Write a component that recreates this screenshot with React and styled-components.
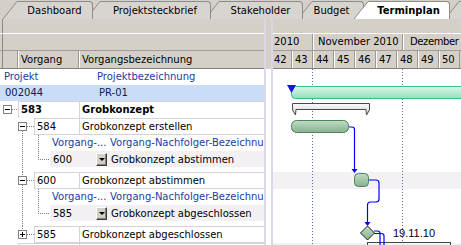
import React from 'react';
import styled, { createGlobalStyle } from 'styled-components';

const GlobalStyle = createGlobalStyle`
  html, body { margin: 0; padding: 0; background: #fff; }
  body { font-family: "DejaVu Sans", Verdana, sans-serif; font-size: 10px; color: #000; }
  * { box-sizing: border-box; }
`;

const Frame = styled.div`
  width: 461px;
  height: 245px;
  overflow: hidden;
  background: #d4d0c8;
  display: flex;
  flex-direction: column;
`;

// tabs
const TabBar = styled.div`
  display: flex;
  align-items: flex-end;
  height: 19px;
  flex: none;
  padding-left: 3px;
  background: #d4d0c8;
  overflow: hidden;
`;
const TabItem = styled.div`
  display: flex;
  flex: none;
  height: 18px;
  margin-left: ${p => p.$ml || 0}px;
  z-index: ${p => p.$z};
`;
const SlantSvg = styled.svg`
  display: block;
  flex: none;
`;
const TabLabel = styled.div`
  width: ${p => p.$w}px;
  height: 18px;
  padding-right: ${p => p.$pr || 0}px;
  line-height: 17px;
  text-align: center;
  white-space: nowrap;
  background: ${p => (p.$active ? '#fff' : '#d8d5d0')};
  border-top: 1px solid #8e8c88;
  border-right: 1px solid #8e8c88;
  border-top-right-radius: 4px;
  font-weight: ${p => (p.$active ? 700 : 400)};
`;

const Tab = ({ label, w, pr, ml, z, active }) => (
  <TabItem $ml={ml} $z={z}>
    <SlantSvg width="14" height="18" viewBox="0 0 14 18">
      <polygon points="0,18 14,0.5 14,18" fill={active ? '#fff' : '#d8d5d0'} />
      <line x1="0" y1="18" x2="14" y2="0.5" stroke="#8e8c88" />
    </SlantSvg>
    <TabLabel $w={w} $pr={pr} $active={active}>{label}</TabLabel>
  </TabItem>
);

// panes
const Body = styled.div`
  display: flex;
  flex: 1;
  min-height: 0;
`;
const LeftPane = styled.div`
  width: 264px;
  flex: none;
  overflow: hidden;
  display: flex;
  flex-direction: column;
  background: #fff;
`;
const Splitter = styled.div`
  width: 9px;
  flex: none;
  border-left: 2px solid #dcd7e6;
  border-right: 2px solid #dcd7e6;
  background: linear-gradient(#d4d0c8 0 50px, #fff 50px);
`;
const GanttPane = styled.div`
  flex: 1;
  min-width: 0;
  overflow: hidden;
  display: flex;
  flex-direction: column;
  background: #fff;
`;

const edge = p => (p.$edge ? 'box-shadow: inset 2px 0 #d4d0c8, inset 3px 0 #8a8884;' : '');

const ToolRow = styled.div`
  height: 15px;
  flex: none;
  background: #d4d0c8;
  border-bottom: 1px solid #fff;
  ${edge}
`;
const BandRow = styled.div`
  height: 17px;
  flex: none;
  display: flex;
  background: #d4d0c8;
  border-bottom: 1px solid #a09c98;
  ${edge}
`;
const HeadRow = styled.div`
  height: 18px;
  flex: none;
  display: flex;
  background: #d4d0c8;
  border-bottom: 1px solid #808080;
  ${edge}
`;
const HeadCell = styled.div`
  width: ${p => p.$w}px;
  flex: none;
  padding-left: ${p => p.$pad ?? 3}px;
  line-height: ${p => p.$lh || 17}px;
  letter-spacing: ${p => p.$ls || 0}px;
  white-space: nowrap;
  overflow: hidden;
  border-right: 1px solid #9c9894;
  box-shadow: ${p => (p.$first ? 'none' : 'inset 1px 0 #fff')};
`;
const Strip = styled.div`
  display: flex;
  margin-left: -2px;
`;

// table rows
const Row = styled.div`
  display: flex;
  flex: none;
  height: ${p => p.$h || 16}px;
  line-height: ${p => p.$h || 16}px;
  background: ${p => p.$bg || '#fff'};
  color: ${p => p.$color || '#000'};
  white-space: nowrap;
`;
const Text = styled.div`
  width: ${p => (p.$w ? `${p.$w}px` : 'auto')};
  flex: ${p => (p.$w ? 'none' : 1)};
  padding-left: ${p => p.$pad || 0}px;
  overflow: hidden;
`;
const TaskRow = styled.div`
  display: flex;
  flex: none;
  height: 17px;
  font-weight: ${p => (p.$bold ? 700 : 400)};
  white-space: nowrap;
`;
const NumCell = styled.div`
  width: ${p => p.$w}px;
  flex: none;
  padding-left: 2px;
  line-height: 15px;
  border-top: 1px solid #d6d2d6;
  border-left: 1px solid #d6d2d6;
  border-bottom: ${p => (p.$last ? '1px solid #d6d2d6' : 'none')};
`;
const DescCell = styled(NumCell)`
  flex: 1;
  width: auto;
  overflow: hidden;
`;
const DropRow = styled.div`
  display: flex;
  flex: none;
  height: 21px;
`;
const DropBox = styled.div`
  flex: 1;
  height: 16px;
  display: flex;
  align-items: center;
  background: #f3f0f3;
  white-space: nowrap;
`;
const DropNum = styled.div`
  width: 46px;
  flex: none;
  padding-left: 3px;
`;
const DropBtn = styled.span`
  width: 11px;
  height: 13px;
  flex: none;
  margin-right: 4px;
  display: flex;
  align-items: center;
  justify-content: center;
  background: #d4d0c8;
  border-top: 1px solid #fff;
  border-left: 1px solid #fff;
  border-right: 1px solid #404040;
  border-bottom: 1px solid #404040;
  box-shadow: inset -1px -1px #808080;
  &::after {
    content: '';
    margin-top: 1px;
    border-left: 3px solid transparent;
    border-right: 3px solid transparent;
    border-top: 3px solid #000;
  }
`;

const GutterSvg = styled.svg`
  display: block;
  flex: none;
`;

const VDot = ({ x, y1, y2 }) => (
  <line x1={x} y1={y1} x2={x} y2={y2} stroke="#808080" strokeDasharray="1 1" />
);
const HDot = ({ y, x1, x2 }) => (
  <line x1={x1} y1={y} x2={x2} y2={y} stroke="#808080" strokeDasharray="1 1" />
);
const Expander = ({ x, y, plus }) => (
  <g>
    <rect x={x + 0.5} y={y + 0.5} width="8" height="8" fill="#fff" stroke="#808080" />
    <line x1={x + 2} y1={y + 4.5} x2={x + 7} y2={y + 4.5} stroke="#000" />
    {plus && <line x1={x + 4.5} y1={y + 2} x2={x + 4.5} y2={y + 7} stroke="#000" />}
  </g>
);
const Gutter = ({ w, h, children }) => (
  <GutterSvg width={w} height={h} viewBox={`0 0 ${w} ${h}`}>{children}</GutterSvg>
);

const BLUE = '#1840a0';

const Chart = styled.svg`
  display: block;
  flex: none;
`;

const GanttChart = () => (
  <Chart width="188" height="176" viewBox="0 0 188 176">
    <defs>
      <linearGradient id="gProj" x1="0" y1="0" x2="0" y2="1">
        <stop offset="0" stopColor="#dcf8ea" />
        <stop offset="1" stopColor="#8fdfba" />
      </linearGradient>
      <linearGradient id="gTask" x1="0" y1="0" x2="0" y2="1">
        <stop offset="0" stopColor="#c2dcc4" />
        <stop offset="1" stopColor="#88b090" />
      </linearGradient>
      <linearGradient id="gSum" x1="0" y1="0" x2="0" y2="1">
        <stop offset="0" stopColor="#fafafa" />
        <stop offset="1" stopColor="#d2d2d2" />
      </linearGradient>
    </defs>
    <rect x="0" y="103" width="188" height="17" fill="#f3f1f3" />
    <rect x="0" y="174" width="188" height="4" fill="#f3f1f3" />
    <line x1="39.5" y1="0" x2="39.5" y2="176" stroke="#5a6ea8" strokeDasharray="1 2" />
    <line x1="129.5" y1="0" x2="129.5" y2="176" stroke="#5a6ea8" strokeDasharray="1 2" />

    <rect x="18.5" y="17.5" width="200" height="12" rx="4" fill="url(#gProj)" stroke="#40bc84" />
    <polygon points="14,16 23,16 18.5,24" fill="#1414e8" />

    <path d="M19.5,34.5 H96.5 V41 L93.5,46 L93,40.5 H23 L22.5,46 L19.5,41 Z" fill="url(#gSum)" stroke="#484848" />

    <rect x="18.5" y="51.5" width="57" height="12" rx="5" fill="url(#gTask)" stroke="#4a8658" />
    <path d="M76,58 H79 Q81.5,58 81.5,60.5 V101" fill="none" stroke="#0000ff" strokeWidth="1.2" />
    <polygon points="78.5,100 84.5,100 81.5,104" fill="#0000ff" />

    <rect x="81.5" y="104.5" width="14" height="13" rx="4" fill="url(#gTask)" stroke="#4a8658" />
    <path d="M96,111 H103 Q106,111 106,114 V130 Q106,133 103,133 H97.5 Q94.5,133 94.5,136 V154" fill="none" stroke="#0000ff" strokeWidth="1.2" />
    <polygon points="91.5,153 97.5,153 94.5,157" fill="#0000ff" />

    <rect x="94.5" y="173.5" width="83" height="10" fill="url(#gSum)" stroke="#484848" />
    <path d="M101,162 H104.5 Q107,162 107,164.5 V176" fill="none" stroke="#0000ff" strokeWidth="1.2" />
    <path d="M101,164.5 H108.5 Q111,164.5 111,167 V176" fill="none" stroke="#0000ff" strokeWidth="1.2" />
    <polygon points="94.5,157 101.5,164 94.5,171 87.5,164" fill="url(#gTask)" stroke="#202020" />
    <text x="120" y="168" fontFamily="Liberation Sans, Arial, sans-serif" fontSize="11" fill="#000">19.11.10</text>
  </Chart>
);

const weeks = [42, 43, 44, 45, 46, 47, 48, 49, 50];

export default function App() {
  return (
    <>
      <GlobalStyle />
      <Frame>
        <TabBar>
          <Tab label="Dashboard" w={76} z={6} />
          <Tab label="Projektsteckbrief" w={111} ml={-7} z={5} />
          <Tab label="Stakeholder" w={84} ml={-6} z={4} />
          <Tab label="Budget" w={52} pr={12} ml={-5} z={3} />
          <Tab label="Terminplan" w={82} ml={-10} z={9} active />
          <Tab label="" w={20} ml={-5} z={1} />
        </TabBar>
        <Body>
          <LeftPane>
            <ToolRow $edge />
            <BandRow $edge />
            <HeadRow $edge>
              <HeadCell $w={18} $first />
              <HeadCell $w={61}>Vorgang</HeadCell>
              <HeadCell $w={190}>Vorgangsbezeichnung</HeadCell>
            </HeadRow>

            <Row $color={BLUE}>
              <Text $w={93} $pad={4}>Projekt</Text>
              <Text $pad={4}>Projektbezeichnung</Text>
            </Row>
            <Row $bg="#c9dcf8" $color="#101c48">
              <Text $w={93} $pad={5}>002044</Text>
              <Text $pad={6}>PR-01</Text>
            </Row>

            <TaskRow $bold>
              <Gutter w={18} h={17}>
                <Expander x={3} y={4} />
                <HDot y={8.5} x1={12} x2={18} />
              </Gutter>
              <NumCell $w={61}>583</NumCell>
              <DescCell>Grobkonzept</DescCell>
            </TaskRow>
            <TaskRow>
              <Gutter w={34} h={17}>
                <Expander x={18} y={4} />
                <HDot y={8.5} x1={27} x2={34} />
                <VDot x={22.5} y1={13} y2={17} />
              </Gutter>
              <NumCell $w={45} $last>584</NumCell>
              <DescCell $last>Grobkonzept erstellen</DescCell>
            </TaskRow>
            <Row $color={BLUE}>
              <Gutter w={50} h={16}>
                <VDot x={22.5} y1={0} y2={16} />
                <VDot x={38.5} y1={0} y2={16} />
              </Gutter>
              <Text $w={60} $pad={2}>Vorgang-...</Text>
              <Text>Vorgang-Nachfolger-Bezeichnung</Text>
            </Row>
            <DropRow>
              <Gutter w={50} h={21}>
                <VDot x={22.5} y1={0} y2={21} />
                <VDot x={38.5} y1={0} y2={8.5} />
                <HDot y={8.5} x1={38} x2={50} />
              </Gutter>
              <DropBox>
                <DropNum>600</DropNum>
                <DropBtn />
                Grobkonzept abstimmen
              </DropBox>
            </DropRow>

            <TaskRow>
              <Gutter w={34} h={17}>
                <VDot x={22.5} y1={0} y2={4} />
                <Expander x={18} y={4} />
                <HDot y={8.5} x1={27} x2={34} />
                <VDot x={22.5} y1={13} y2={17} />
              </Gutter>
              <NumCell $w={45} $last>600</NumCell>
              <DescCell $last>Grobkonzept abstimmen</DescCell>
            </TaskRow>
            <Row $color={BLUE}>
              <Gutter w={50} h={16}>
                <VDot x={22.5} y1={0} y2={16} />
                <VDot x={38.5} y1={0} y2={16} />
              </Gutter>
              <Text $w={60} $pad={2}>Vorgang-...</Text>
              <Text>Vorgang-Nachfolger-Bezeichnung</Text>
            </Row>
            <DropRow>
              <Gutter w={50} h={21}>
                <VDot x={22.5} y1={0} y2={21} />
                <VDot x={38.5} y1={0} y2={8.5} />
                <HDot y={8.5} x1={38} x2={50} />
              </Gutter>
              <DropBox>
                <DropNum>585</DropNum>
                <DropBtn />
                Grobkonzept abgeschlossen
              </DropBox>
            </DropRow>

            <TaskRow>
              <Gutter w={34} h={17}>
                <VDot x={22.5} y1={0} y2={4} />
                <Expander x={18} y={4} plus />
                <HDot y={8.5} x1={27} x2={34} />
              </Gutter>
              <NumCell $w={45} $last>585</NumCell>
              <DescCell $last>Grobkonzept abgeschlossen</DescCell>
            </TaskRow>
            <TaskRow $bold>
              <Gutter w={18} h={17} />
              <NumCell $w={61} />
              <DescCell />
            </TaskRow>
          </LeftPane>

          <Splitter />

          <GanttPane>
            <ToolRow />
            <BandRow>
              <Strip>
                <HeadCell $w={42} $pad={3} $lh={16}>2010</HeadCell>
                <HeadCell $w={90} $pad={5} $lh={16}>November 2010</HeadCell>
                <HeadCell $w={93} $pad={7} $lh={16} $ls={-0.4}>Dezember</HeadCell>
              </Strip>
            </BandRow>
            <HeadRow>
              <Strip>
                {weeks.map(w => (
                  <HeadCell key={w} $w={21} $pad={3}>{w}</HeadCell>
                ))}
              </Strip>
            </HeadRow>
            <GanttChart />
          </GanttPane>
        </Body>
      </Frame>
    </>
  );
}
